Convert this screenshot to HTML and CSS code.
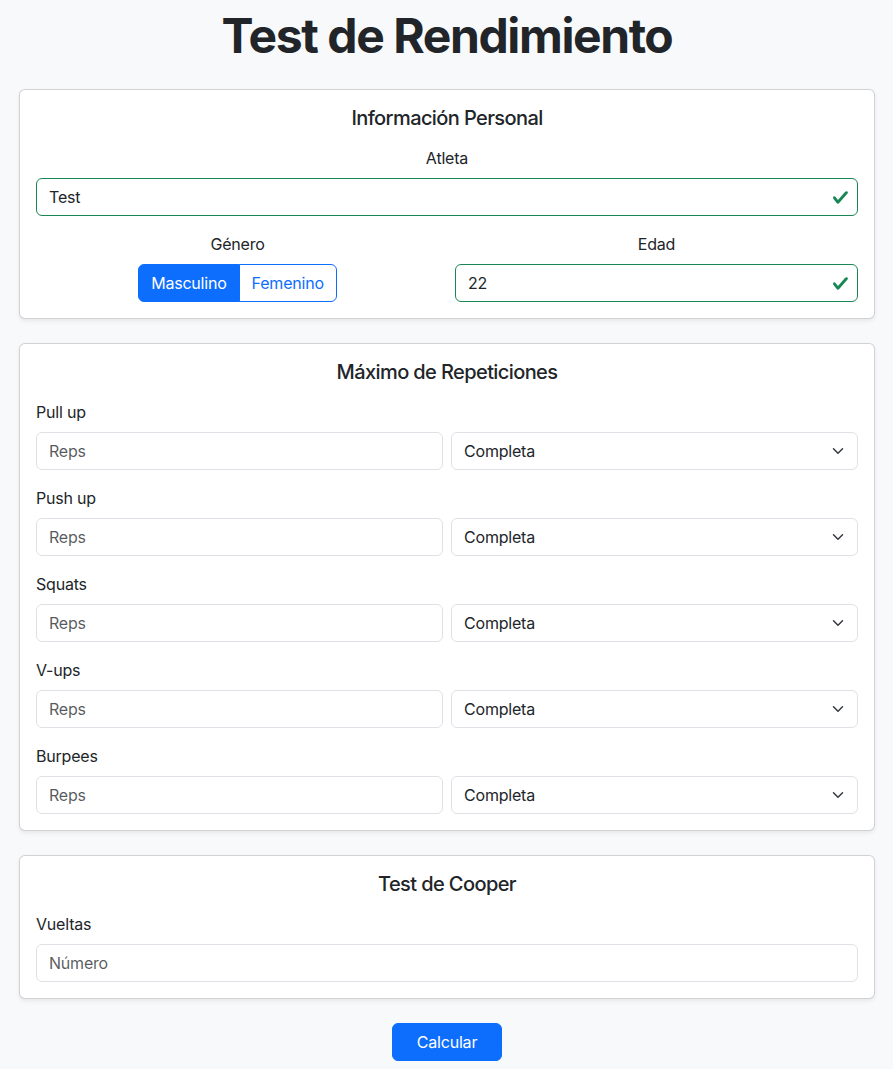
FILE: index.html
```html
<!DOCTYPE html>
<html lang="es">
<head>
<meta charset="utf-8">
<title>Test de Rendimiento</title>
<link rel="stylesheet" href="styles.css">
</head>
<body>
<main class="container">
  <h1 class="title">Test de Rendimiento</h1>

  <section class="card">
    <h5 class="card-title">Información Personal</h5>
    <div class="group center">
      <label class="form-label">Atleta</label>
      <div class="valid-wrap">
        <input class="form-control is-valid" type="text" value="Test">
        <svg class="check" viewBox="0 0 8 8" width="17" height="17"><path fill="#198754" d="M2.3 6.73.6 4.53c-.4-1.04.46-1.4 1.1-.8l1.1 1.4 3.4-3.8c.6-.63 1.6-.27 1.2.7l-4 4.6c-.43.5-.8.4-1.1.1z"/></svg>
      </div>
    </div>
    <div class="row-2 wide">
      <div class="center">
        <label class="form-label">Género</label>
        <div class="btn-group">
          <span class="btn-seg active">Masculino</span>
          <span class="btn-seg">Femenino</span>
        </div>
      </div>
      <div class="center">
        <label class="form-label">Edad</label>
        <div class="valid-wrap">
          <input class="form-control is-valid" type="text" value="22">
          <svg class="check" viewBox="0 0 8 8" width="17" height="17"><path fill="#198754" d="M2.3 6.73.6 4.53c-.4-1.04.46-1.4 1.1-.8l1.1 1.4 3.4-3.8c.6-.63 1.6-.27 1.2.7l-4 4.6c-.43.5-.8.4-1.1.1z"/></svg>
        </div>
      </div>
    </div>
  </section>

  <section class="card">
    <h5 class="card-title">Máximo de Repeticiones</h5>
    <div class="group">
      <label class="form-label">Pull up</label>
      <div class="row-2">
        <input class="form-control" type="text" placeholder="Reps">
        <div class="select-wrap"><select class="form-select"><option>Completa</option></select><svg class="chev" viewBox="0 0 16 16" width="16" height="12"><path fill="none" stroke="#343a40" stroke-linecap="round" stroke-linejoin="round" stroke-width="2" d="m2 5 6 6 6-6"/></svg></div>
      </div>
    </div>
    <div class="group">
      <label class="form-label">Push up</label>
      <div class="row-2">
        <input class="form-control" type="text" placeholder="Reps">
        <div class="select-wrap"><select class="form-select"><option>Completa</option></select><svg class="chev" viewBox="0 0 16 16" width="16" height="12"><path fill="none" stroke="#343a40" stroke-linecap="round" stroke-linejoin="round" stroke-width="2" d="m2 5 6 6 6-6"/></svg></div>
      </div>
    </div>
    <div class="group">
      <label class="form-label">Squats</label>
      <div class="row-2">
        <input class="form-control" type="text" placeholder="Reps">
        <div class="select-wrap"><select class="form-select"><option>Completa</option></select><svg class="chev" viewBox="0 0 16 16" width="16" height="12"><path fill="none" stroke="#343a40" stroke-linecap="round" stroke-linejoin="round" stroke-width="2" d="m2 5 6 6 6-6"/></svg></div>
      </div>
    </div>
    <div class="group">
      <label class="form-label">V-ups</label>
      <div class="row-2">
        <input class="form-control" type="text" placeholder="Reps">
        <div class="select-wrap"><select class="form-select"><option>Completa</option></select><svg class="chev" viewBox="0 0 16 16" width="16" height="12"><path fill="none" stroke="#343a40" stroke-linecap="round" stroke-linejoin="round" stroke-width="2" d="m2 5 6 6 6-6"/></svg></div>
      </div>
    </div>
    <div class="group">
      <label class="form-label">Burpees</label>
      <div class="row-2">
        <input class="form-control" type="text" placeholder="Reps">
        <div class="select-wrap"><select class="form-select"><option>Completa</option></select><svg class="chev" viewBox="0 0 16 16" width="16" height="12"><path fill="none" stroke="#343a40" stroke-linecap="round" stroke-linejoin="round" stroke-width="2" d="m2 5 6 6 6-6"/></svg></div>
      </div>
    </div>
  </section>

  <section class="card">
    <h5 class="card-title">Test de Cooper</h5>
    <div class="group">
      <label class="form-label">Vueltas</label>
      <input class="form-control" type="text" placeholder="Número">
    </div>
  </section>

  <div class="actions">
    <button class="btn-primary" type="button">Calcular</button>
  </div>
</main>
</body>
</html>
```

FILE: styles.css
```css
* { box-sizing: border-box; }

html, body {
  margin: 0;
  padding: 0;
}

body {
  background: #f8f9fa;
  color: #212529;
  font-family: Inter, "Noto Sans", "Liberation Sans", sans-serif;
  font-size: 16px;
  line-height: 1.5;
  letter-spacing: -0.2px;
}

.container {
  padding: 7px 18px 8px 19px;
}

.title {
  margin: 0 0 24px;
  font-size: 48px;
  line-height: 58px;
  font-weight: 700;
  text-align: center;
  letter-spacing: -1.4px;
}

.card {
  background: #fff;
  border: 1px solid rgba(0, 0, 0, 0.175);
  border-radius: 6px;
  box-shadow: 0 2px 4px rgba(0, 0, 0, 0.075);
  padding: 16px;
  margin-bottom: 24px;
}

.card-title {
  margin: 0 0 16px;
  font-size: 20px;
  line-height: 24px;
  font-weight: 500;
  text-align: center;
  letter-spacing: -0.6px;
}

.group {
  margin-bottom: 16px;
}

.card > .group:last-child {
  margin-bottom: 0;
}

.center {
  text-align: center;
}

.form-label {
  display: block;
  margin-bottom: 8px;
  line-height: 24px;
}

.row-2 {
  display: grid;
  grid-template-columns: 1fr 1fr;
  gap: 8px;
}

.row-2.wide {
  gap: 16px;
}

.form-control,
.form-select {
  display: block;
  width: 100%;
  height: 38px;
  padding: 6px 12px;
  font-family: inherit;
  font-size: 16px;
  line-height: 24px;
  letter-spacing: -0.2px;
  color: #212529;
  background: #fff;
  border: 1px solid #dee2e6;
  border-radius: 6px;
  outline: none;
}

.form-control::placeholder {
  color: rgba(33, 37, 41, 0.75);
}

.form-control.is-valid {
  border-color: #198754;
  padding-right: 36px;
}

.valid-wrap,
.select-wrap {
  position: relative;
  text-align: left;
}

.check {
  position: absolute;
  right: 9px;
  top: 50%;
  margin-top: -8.5px;
}

.form-select {
  appearance: none;
  -webkit-appearance: none;
  padding-right: 36px;
}

.chev {
  position: absolute;
  right: 12px;
  top: 13px;
  pointer-events: none;
}

.btn-group {
  display: inline-flex;
  vertical-align: middle;
}

.btn-seg {
  display: inline-block;
  padding: 6px 12px;
  line-height: 24px;
  font-size: 16px;
  color: #0d6efd;
  background: #fff;
  border: 1px solid #0d6efd;
}

.btn-seg:first-child {
  border-radius: 6px 0 0 6px;
}

.btn-seg:last-child {
  border-radius: 0 6px 6px 0;
  margin-left: -1px;
}

.btn-seg.active {
  color: #fff;
  background: #0d6efd;
}

.actions {
  text-align: center;
}

.btn-primary {
  font-family: inherit;
  font-size: 16px;
  line-height: 24px;
  letter-spacing: -0.2px;
  padding: 6px 24px;
  color: #fff;
  background: #0d6efd;
  border: 1px solid #0d6efd;
  border-radius: 6px;
  cursor: pointer;
}
```
